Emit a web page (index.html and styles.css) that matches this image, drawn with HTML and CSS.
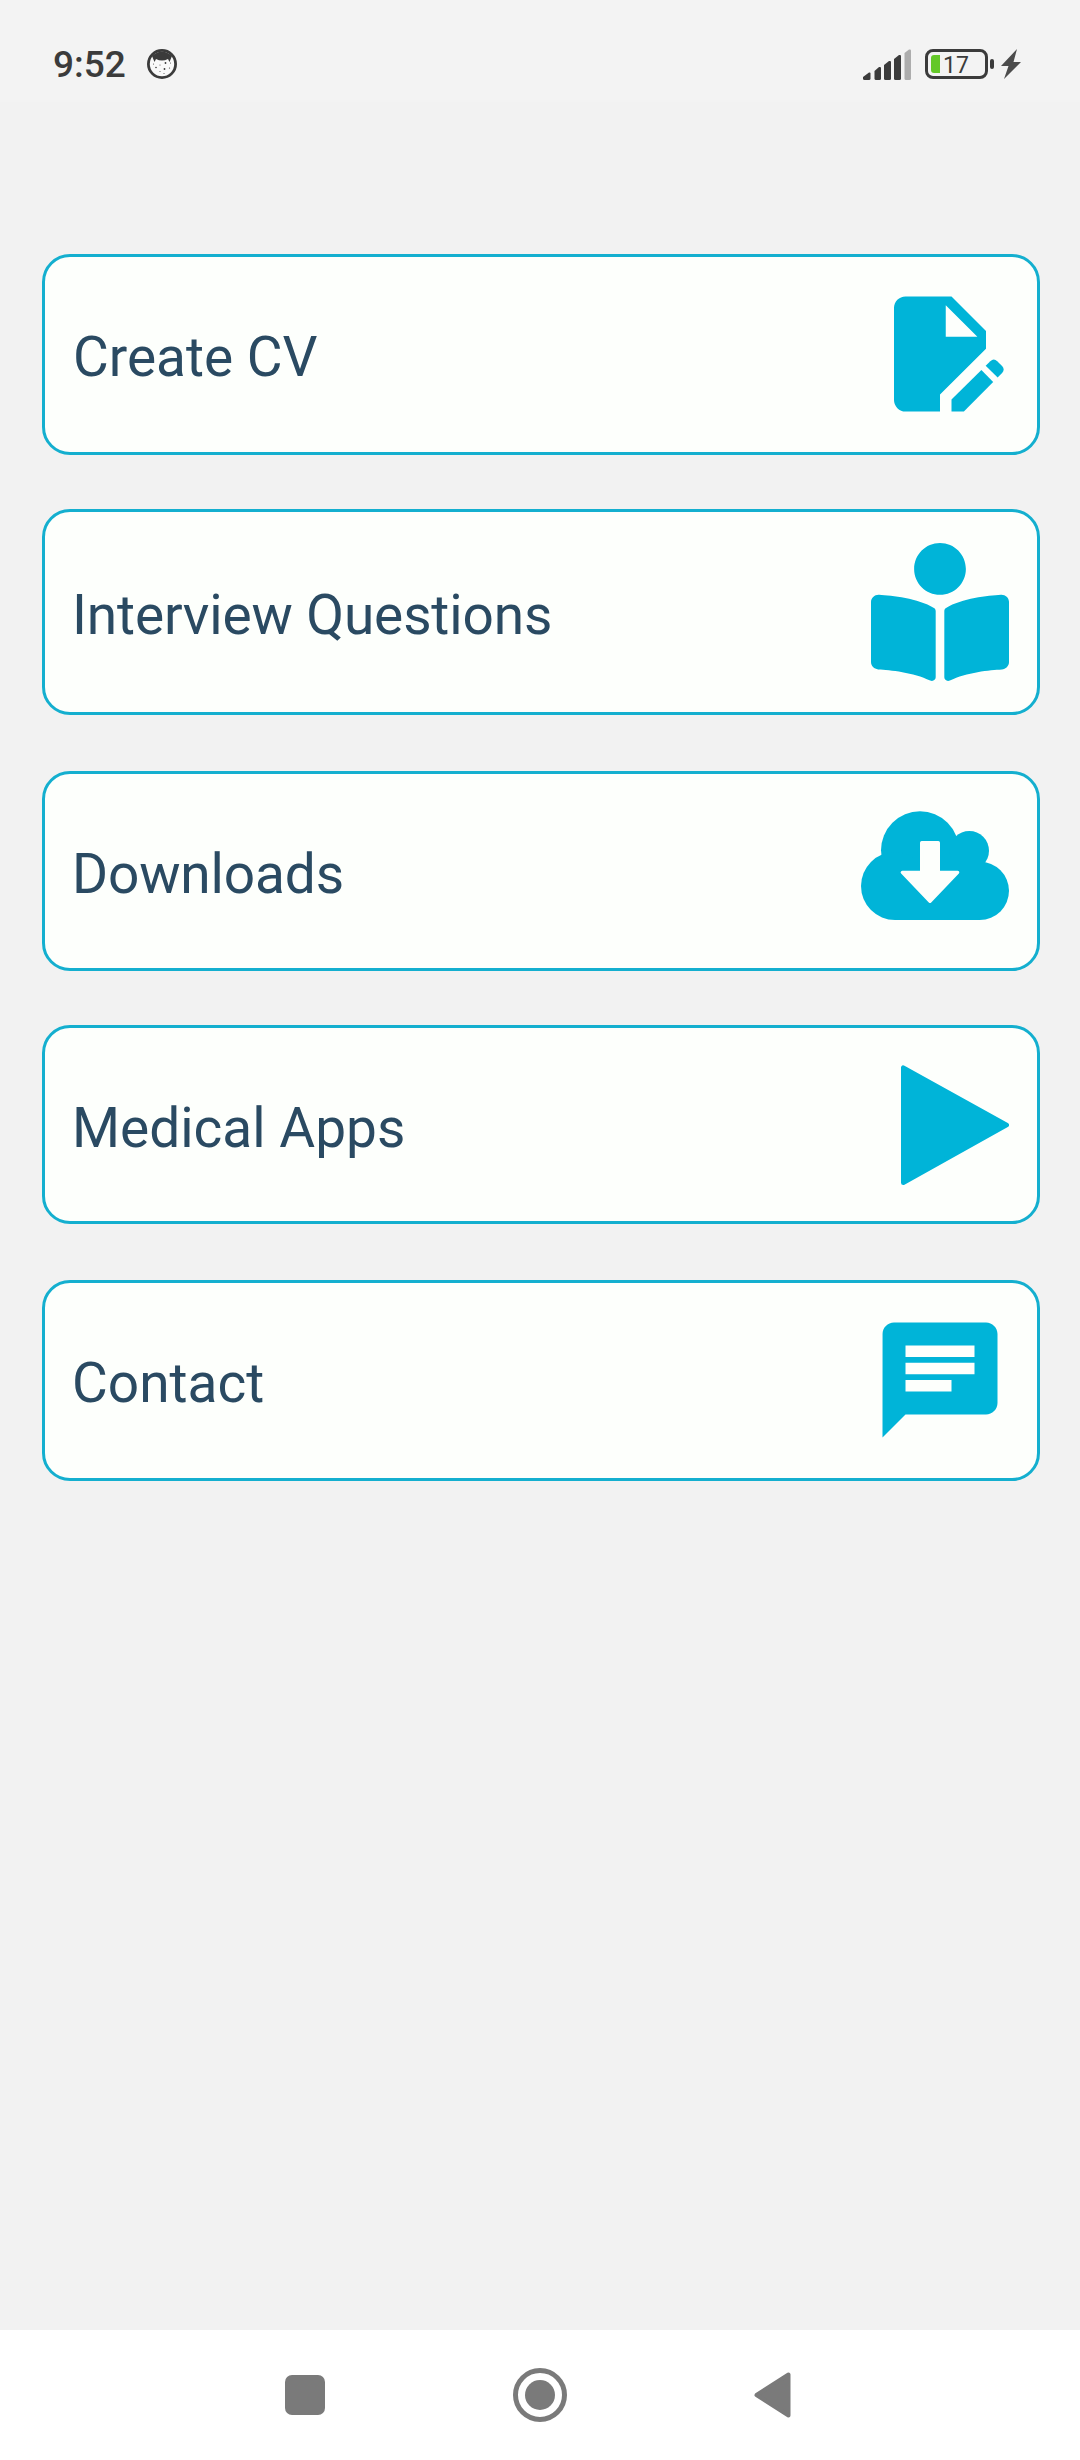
FILE: index.html
```html
<!DOCTYPE html>
<html lang="en">
<head>
  <meta charset="UTF-8">
  <title>Create CV</title>
  <link rel="stylesheet" href="styles.css">
</head>
<body>

  <header class="status">
    <span class="time">9:52</span>
    <svg class="face" width="30" height="30" viewBox="0 0 30 30">
      <circle cx="15" cy="15" r="13.6" fill="#f9f9f9" stroke="#3b3b3b" stroke-width="2.8"/>
      <path d="M5 7Q15-2 25 7L22.5 13L21 10Q15 13 9 10L7.5 13Z" fill="#3b3b3b"/>
      <g fill="#3b3b3b">
        <circle cx="18.5" cy="14" r=".9"/><circle cx="9" cy="18.5" r=".8"/><circle cx="17.5" cy="20" r=".9"/>
        <circle cx="22.5" cy="19" r=".6"/><circle cx="13" cy="16" r=".5"/><circle cx="13" cy="22.5" r=".5"/>
        <circle cx="6.5" cy="15" r=".5"/><circle cx="23.5" cy="14" r=".5"/><circle cx="17" cy="24.5" r=".5"/>
      </g>
    </svg>
    <svg class="signal" width="48" height="31" viewBox="0 0 48 31">
      <g fill="#3b3b3b">
        <path d="M0 28L6 23.5Q7.5 23 7.5 24.5V29.500Q7.500 31 6 31H1.500Q0 31 0 29.500Z"/>
        <path d="M11.500 22L16 18Q18 17.500 18 19V29.500Q18 31 16.500 31H13Q11.500 31 11.500 29.500Z"/>
        <path d="M21 16L26 12Q28 11.500 28 13V29.500Q28 31 26.500 31H22.500Q21 31 21 29.500Z"/>
        <path d="M31 10L36 6Q38 5.500 38 7V29.500Q38 31 36.500 31H32.500Q31 31 31 29.500Z"/>
      </g>
      <path d="M41.500 4L46 .5Q48 0 48 1.500V29.500Q48 31 46.500 31H43Q41.500 31 41.500 29.500Z" fill="#adadad"/>
    </svg>
    <div class="battery"><i class="level"></i><span>17</span></div>
    <i class="battery-cap"></i>
    <svg class="bolt" width="20" height="30" viewBox="0 0 20 30">
      <path d="M16 0L0 17H7.500L3 30L20 13H12.500Z" fill="#4c4c4c"/>
    </svg>
  </header>

  <main class="menu">
    <a class="card card-cv">
      <span>Create CV</span>
      <svg width="138" height="138" viewBox="0 0 24 24">
        <path d="M6 2C4.890 2 4 2.890 4 4V20A2 2 0 0 0 6 22H12V19.050L20 11.100V8L14 2ZM13 3.500L18.500 9H13Z"/>
        <path d="M14 22V19.920L19.200 14.800L21.250 16.850L16.150 22Z"/>
        <path d="M19.940 14.060L20.750 13.250Q21.350 12.700 21.950 13.250L22.800 14.100Q23.350 14.700 22.800 15.300L22.030 16.080Z"/>
      </svg>
    </a>
    <a class="card card-questions">
      <span>Interview Questions</span>
      <svg width="138" height="138" viewBox="0 0 512 512">
        <path d="M352 96c0-53.020-42.980-96-96-96s-96 42.980-96 96 42.980 96 96 96 96-42.980 96-96zM233.590 241.100c-59.330-36.320-155.430-46.300-203.790-49.050C13.550 191.130 0 203.510 0 219.140v222.800c0 14.330 11.590 26.280 26.490 27.050 43.660 2.290 131.990 10.680 193.040 41.430 9.370 4.720 20.480-1.710 20.480-11.870V252.560c-.010-4.670-2.320-8.950-6.420-11.460zm248.610-49.050c-48.350 2.740-144.460 12.730-203.780 49.050-4.100 2.510-6.410 6.960-6.410 11.630v245.790c0 10.190 11.140 16.630 20.540 11.900 61.040-30.720 149.320-39.110 192.970-41.400 14.900-.780 26.490-12.730 26.490-27.060V219.140c-.010-15.630-13.560-28.010-29.810-27.090z"/>
      </svg>
    </a>
    <a class="card card-downloads">
      <span>Downloads</span>
      <svg width="148" height="120" viewBox="63 153 444 360">
        <circle cx="240" cy="271" r="117"/>
        <circle cx="388" cy="272" r="59"/>
        <circle cx="165" cy="378" r="102"/>
        <circle cx="419.500" cy="392.500" r="87.500"/>
        <path d="M165 300H420V480H165Z"/>
        <path class="arrow" d="M245 248H295V337H353L270 424L187 337H245Z"/>
      </svg>
    </a>
    <a class="card card-apps">
      <span>Medical Apps</span>
      <svg width="108" height="120" viewBox="183 149 324 360">
        <path class="play" d="M190 157V502L500 329Z"/>
      </svg>
    </a>
    <a class="card card-contact">
      <span>Contact</span>
      <svg width="138" height="138" viewBox="0 0 24 24">
        <path d="M20 2H4c-1.100 0-1.990.900-1.990 2L2 22l4-4h14c1.100 0 2-.900 2-2V4c0-1.100-.900-2-2-2zM6 9h12v2H6V9zm8 5H6v-2h8v2zm4-6H6V6h12v2z"/>
      </svg>
    </a>
  </main>

  <nav class="navbar">
    <svg width="40" height="40" viewBox="0 0 40 40"><rect width="40" height="40" rx="7"/></svg>
    <svg width="54" height="54" viewBox="0 0 54 54">
      <circle class="ring" cx="27" cy="27" r="24.500"/>
      <circle cx="27" cy="27" r="15"/>
    </svg>
    <svg width="37" height="46" viewBox="0 0 37 46"><path class="back" d="M2.500 23L34.500 2.500V43.500Z"/></svg>
  </nav>

</body>
</html>
```
FILE: styles.css
```css
* {
  box-sizing: border-box;
}

body {
  display: flex;
  flex-direction: column;
  height: 2460px;
  margin: 0;
  background-color: #f2f2f2;
  font-family: Roboto, sans-serif;
}

svg {
  display: block;
  flex-shrink: 0;
}

/* status bar */
.status {
  display: flex;
  align-items: center;
  height: 102px;
  padding: 26px 59px 0 53px;
  background-color: #f3f3f3;
  color: #3b3b3b;
}

.time {
  width: 94px;
  font-size: 37px;
  font-weight: 500;
}

.signal {
  margin-left: auto;
}

.battery {
  display: flex;
  align-items: center;
  width: 63px;
  height: 30px;
  margin-left: 14px;
  padding-left: 3px;
  border: 3px solid #3b3b3b;
  border-radius: 8px;
  font-size: 23px;
  line-height: 24px;
}

.battery span {
  padding-top: 3px;
}

.level {
  width: 9px;
  height: 18px;
  margin-right: 3px;
  border-radius: 3px 0 0 3px;
  background-color: #64c828;
}

.battery-cap {
  width: 4px;
  height: 10px;
  margin-left: 2px;
  border-radius: 2px;
  background-color: #3b3b3b;
}

.bolt {
  margin-left: 7px;
}

/* menu */
.menu {
  flex: 1;
  padding: 152px 40px 0 42px;
}

.card {
  display: flex;
  align-items: center;
  justify-content: space-between;
  height: 201px;
  margin-bottom: 54px;
  padding: 0 28px 0 27px;
  border: 3px solid #14afcf;
  border-radius: 28px;
  background-color: #fdfffc;
  color: #2a4a62;
  font-size: 55px;
}

.card span {
  padding-top: 6px;
}

.card svg {
  fill: #00b4d8;
}

.card-cv,
.card-contact {
  padding-bottom: 2px;
}

.card-cv {
  padding-left: 28px;
}

.card-questions {
  height: 206px;
  margin-bottom: 56px;
  letter-spacing: -0.15px;
}

.card-downloads {
  height: 200px;
  letter-spacing: -0.15px;
}

.card-apps {
  height: 199px;
  margin-bottom: 56px;
}

.card .arrow {
  fill: #fdfffc;
  stroke: #fdfffc;
  stroke-width: 10;
  stroke-linejoin: round;
}

.play {
  stroke: #00b4d8;
  stroke-width: 14;
  stroke-linejoin: round;
}

/* system buttons */
.navbar {
  display: flex;
  align-items: center;
  justify-content: space-between;
  height: 130px;
  padding: 0 289px 0 285px;
  background-color: #fff;
  fill: #7a7a7a;
}

.ring {
  fill: none;
  stroke: #7a7a7a;
  stroke-width: 5;
}

.back {
  stroke: #7a7a7a;
  stroke-width: 4;
  stroke-linejoin: round;
}
```
